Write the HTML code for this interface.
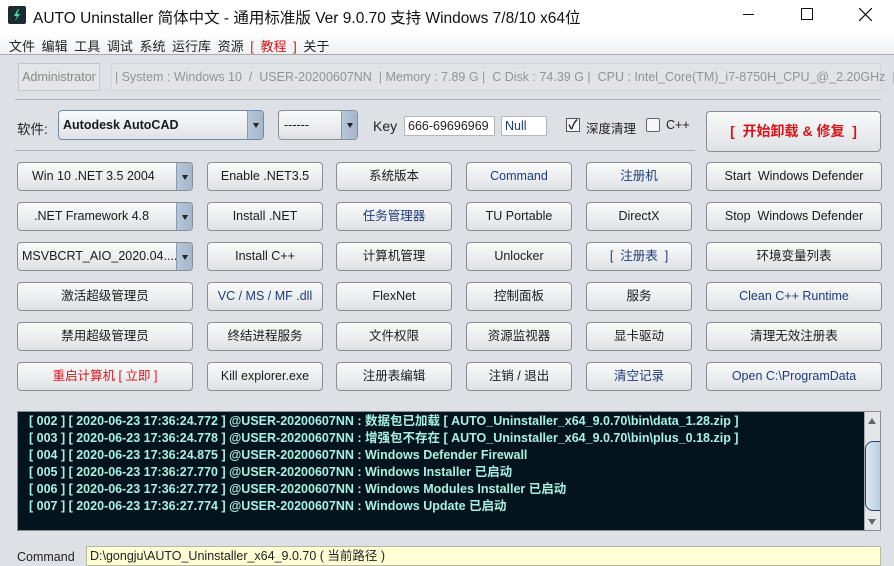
<!DOCTYPE html>
<html><head><meta charset="utf-8"><style>
*{box-sizing:border-box;margin:0;padding:0}
body{width:894px;height:561px;overflow:hidden;background:#dde0e5;font-family:"Liberation Sans","Noto Sans CJK SC",sans-serif;position:relative;font-size:12px;color:#222}
.a{position:absolute}
#title{left:0;top:0;width:894px;height:32px;background:#fff}
#menu{left:0;top:32px;width:894px;height:23px;background:linear-gradient(#fff,#eef0f2);border-bottom:1px solid #a8abb0}
.btn{position:absolute;height:29px;border:1px solid #8a8d92;border-radius:4px;background:linear-gradient(#fafafa,#eceef0 50%,#dfe2e5);text-align:center;line-height:27px;font-size:12.5px;color:#1a1a1a;white-space:nowrap;overflow:hidden}
.blue{color:#1c3c7c}.red{color:#d8141a}
.arr{position:absolute;right:0;top:0;width:16px;height:27px;background:linear-gradient(90deg,#b7c7d9,#a3b6cc);border-left:1px solid #8a9ab0}
.arr:after{content:"";position:absolute;left:5px;top:12px;border:3.5px solid transparent;border-top:5px solid #222}
.log{font-family:"Liberation Sans Narrow","Liberation Sans","Noto Sans CJK SC",sans-serif;font-weight:bold;color:#a8f2e4;font-size:12.5px;line-height:17px;white-space:nowrap}
</style></head><body>
<div id="title" class="a"></div>
<div class="a" style="left:8px;top:6px;width:18px;height:18px;background:#1c2b2f;border-radius:2px"><svg width="18" height="18"><path d="M10 3 L6 10 H9 L7 15 L12 8 H9 L11 3Z" fill="#3ee0a0"/></svg></div>
<div class="a" style="left:33px;top:6px;font-size:15.5px;color:#111;white-space:nowrap">AUTO Uninstaller 简体中文 - 通用标准版 Ver 9.0.70 支持 Windows 7/8/10 x64位</div>
<div class="a" style="left:743px;top:14px;width:11px;height:1px;background:#111"></div>
<div class="a" style="left:801px;top:8px;width:12px;height:12px;border:1px solid #111"></div>
<svg class="a" style="left:859px;top:8px" width="13" height="13"><path d="M0 0L13 13M13 0L0 13" stroke="#111" stroke-width="1.2"/></svg>
<div id="menu" class="a"></div>
<div class="a" style="left:9px;top:36px;font-size:13px;white-space:nowrap;word-spacing:3px">文件 编辑 工具 调试 系统 运行库 资源 <span style="color:#d8141a">[ 教程 ]</span> 关于</div>
<div class="a" style="left:18px;top:63px;width:82px;height:28px;border:1px solid #c2c5ca;background:#e3e5e8;color:#888;font-size:12.5px;line-height:26px;text-align:center">Administrator</div>
<div class="a" style="left:111px;top:63px;width:770px;height:28px;border:1px solid #d2d5d9;background:#e1e3e6;color:#909399;font-size:12.5px;line-height:26px;padding-left:3px;white-space:nowrap">| System : Windows 10 &nbsp;/ &nbsp;USER-20200607NN &nbsp;| Memory : 7.89 G | &nbsp;C Disk : 74.39 G | &nbsp;CPU : Intel_Core(TM)_i7-8750H_CPU_@_2.20GHz &nbsp;|</div>
<div class="a" style="left:15px;top:99px;width:866px;height:1px;background:#a9adb2"></div>
<div class="a" style="left:17px;top:118px;font-size:13.5px">软件:</div>
<div class="btn" style="left:58px;top:110px;width:206px;height:30px;border-color:#6f89ad;text-align:left;padding-left:4px;font-weight:bold;font-size:12.5px;line-height:28px">Autodesk AutoCAD<div class="arr" style="height:28px"></div></div>
<div class="btn" style="left:278px;top:110px;width:80px;height:30px;text-align:left;padding-left:5px;line-height:28px">------<div class="arr" style="height:28px"></div></div>
<div class="a" style="left:373px;top:118px;font-size:14px">Key</div>
<div class="a" style="left:404px;top:116px;width:91px;height:20px;background:#fff;border:1px solid #b4b7bc;font-size:12.5px;line-height:18px;padding-left:3px">666-69696969</div>
<div class="a" style="left:501px;top:116px;width:46px;height:20px;background:#fff;border:1px solid #b4b7bc;font-size:12.5px;line-height:18px;padding-left:3px;color:#1c3c7c">Null</div>
<div class="a" style="left:566px;top:118px;width:14px;height:14px;border:1px solid #555;background:#f4f6f8;font-size:13px;line-height:12px;text-align:center;font-weight:bold">✓</div>
<div class="a" style="left:586px;top:118px;font-size:12.5px">深度清理</div>
<div class="a" style="left:646px;top:118px;width:14px;height:14px;border:1px solid #666;background:#f4f6f8;border-radius:2px"></div>
<div class="a" style="left:666px;top:118px;font-size:12.5px">C++</div>
<div class="btn red" style="left:706px;top:111px;width:175px;height:41px;line-height:39px;font-weight:bold;font-size:14px">[ &nbsp;开始卸载 &amp; 修复 &nbsp;]</div>
<div class="a" style="left:15px;top:150px;width:680px;height:1px;background:#a9adb2"></div>

<div class="btn" style="left:17px;top:162px;width:176px;text-align:left;padding-left:14px">Win 10 .NET 3.5 2004<div class="arr"></div></div>
<div class="btn" style="left:17px;top:202px;width:176px;text-align:left;padding-left:16px">.NET Framework 4.8<div class="arr"></div></div>
<div class="btn" style="left:17px;top:242px;width:176px;text-align:left;padding-left:4px">MSVBCRT_AIO_2020.04....<div class="arr"></div></div>
<div class="btn" style="left:17px;top:282px;width:176px">激活超级管理员</div>
<div class="btn" style="left:17px;top:322px;width:176px">禁用超级管理员</div>
<div class="btn red" style="left:17px;top:362px;width:176px">重启计算机 [ 立即 ]</div>

<div class="btn" style="left:207px;top:162px;width:116px">Enable .NET3.5</div>
<div class="btn" style="left:207px;top:202px;width:116px">Install .NET</div>
<div class="btn" style="left:207px;top:242px;width:116px">Install C++</div>
<div class="btn blue" style="left:207px;top:282px;width:116px">VC / MS / MF .dll</div>
<div class="btn" style="left:207px;top:322px;width:116px">终结进程服务</div>
<div class="btn" style="left:207px;top:362px;width:116px">Kill explorer.exe</div>

<div class="btn" style="left:336px;top:162px;width:116px">系统版本</div>
<div class="btn blue" style="left:336px;top:202px;width:116px">任务管理器</div>
<div class="btn" style="left:336px;top:242px;width:116px">计算机管理</div>
<div class="btn" style="left:336px;top:282px;width:116px">FlexNet</div>
<div class="btn" style="left:336px;top:322px;width:116px">文件权限</div>
<div class="btn" style="left:336px;top:362px;width:116px">注册表编辑</div>

<div class="btn blue" style="left:466px;top:162px;width:106px">Command</div>
<div class="btn" style="left:466px;top:202px;width:106px">TU Portable</div>
<div class="btn" style="left:466px;top:242px;width:106px">Unlocker</div>
<div class="btn" style="left:466px;top:282px;width:106px">控制面板</div>
<div class="btn" style="left:466px;top:322px;width:106px">资源监视器</div>
<div class="btn" style="left:466px;top:362px;width:106px">注销 / 退出</div>

<div class="btn blue" style="left:586px;top:162px;width:106px">注册机</div>
<div class="btn" style="left:586px;top:202px;width:106px">DirectX</div>
<div class="btn blue" style="left:586px;top:242px;width:106px">[ &nbsp;注册表 &nbsp;]</div>
<div class="btn" style="left:586px;top:282px;width:106px">服务</div>
<div class="btn" style="left:586px;top:322px;width:106px">显卡驱动</div>
<div class="btn blue" style="left:586px;top:362px;width:106px">清空记录</div>

<div class="btn" style="left:706px;top:162px;width:176px">Start &nbsp;Windows Defender</div>
<div class="btn" style="left:706px;top:202px;width:176px">Stop &nbsp;Windows Defender</div>
<div class="btn" style="left:706px;top:242px;width:176px">环境变量列表</div>
<div class="btn blue" style="left:706px;top:282px;width:176px">Clean C++ Runtime</div>
<div class="btn" style="left:706px;top:322px;width:176px">清理无效注册表</div>
<div class="btn blue" style="left:706px;top:362px;width:176px">Open C:\ProgramData</div>

<div class="a" style="left:17px;top:411px;width:864px;height:120px;background:#04141e;border:1px solid #8a8d92"></div>
<div class="a log" style="left:29px;top:413px">
[ 002 ] [ 2020-06-23 17:36:24.772 ] @USER-20200607NN : 数据包已加载 [ AUTO_Uninstaller_x64_9.0.70\bin\data_1.28.zip ]<br>
[ 003 ] [ 2020-06-23 17:36:24.778 ] @USER-20200607NN : 增强包不存在 [ AUTO_Uninstaller_x64_9.0.70\bin\plus_0.18.zip ]<br>
[ 004 ] [ 2020-06-23 17:36:24.875 ] @USER-20200607NN : Windows Defender Firewall<br>
[ 005 ] [ 2020-06-23 17:36:27.770 ] @USER-20200607NN : Windows Installer 已启动<br>
[ 006 ] [ 2020-06-23 17:36:27.772 ] @USER-20200607NN : Windows Modules Installer 已启动<br>
[ 007 ] [ 2020-06-23 17:36:27.774 ] @USER-20200607NN : Windows Update 已启动</div>
<div class="a" style="left:864px;top:412px;width:16px;height:118px;background:#e4e6e9;border-left:1px solid #aaa"></div>
<div class="a" style="left:868px;top:418px;border:4px solid transparent;border-bottom:6px solid #666;border-top:0"></div>
<div class="a" style="left:865px;top:441px;width:15px;height:70px;background:linear-gradient(90deg,#dce8f5,#b8cde4);border:1px solid #2a3f6a;border-right:none;border-radius:8px 0 0 8px"></div>
<div class="a" style="left:868px;top:519px;border:4px solid transparent;border-top:6px solid #666;border-bottom:0"></div>
<div class="a" style="left:17px;top:550px;font-size:12.5px">Command</div>
<div class="a" style="left:86px;top:546px;width:795px;height:20px;background:#ffffd6;border:1px solid #b8b8a0;font-size:12.5px;padding-left:3px;line-height:18px">D:\gongju\AUTO_Uninstaller_x64_9.0.70 ( 当前路径 )</div>
</body></html>
